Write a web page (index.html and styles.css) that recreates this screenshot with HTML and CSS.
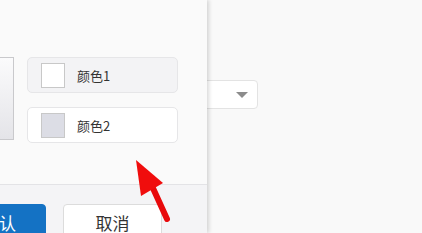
FILE: index.html
```html
<!DOCTYPE html>
<html lang="zh">
<head>
    <meta charset="UTF-8">
    <title>颜色设置</title>
    <link rel="stylesheet" href="styles.css">
</head>
<body>
    <div class="page">
        <div class="select">
            <span class="caret"></span>
        </div>
    </div>

    <div class="dialog">
        <div class="dialog-body">
            <div class="picker"></div>
            <div class="color-list">
                <div class="color-item active">
                    <span class="swatch" style="background-color: #ffffff;"></span>
                    <span class="label">颜色1</span>
                </div>
                <div class="color-item">
                    <span class="swatch" style="background-color: #dcdde5;"></span>
                    <span class="label">颜色2</span>
                </div>
            </div>
        </div>
        <div class="dialog-footer">
            <button class="btn btn-primary">确认</button>
            <button class="btn">取消</button>
        </div>
    </div>

    <svg class="pointer" width="40" height="70" viewBox="0 0 40 70">
        <line x1="17" y1="30" x2="32" y2="63" stroke="#e8090b" stroke-width="6" stroke-linecap="round"/>
        <polygon points="1,4 28,27 6,40" fill="#f00d0d"/>
    </svg>
</body>
</html>
```

FILE: styles.css
```css
body {
    margin: 0;
    background-color: #f9f9f9;
    font-family: "Microsoft YaHei", "Noto Sans CJK SC", sans-serif;
    color: #333;
    overflow: hidden;
    height: 233px;
}
.page {
    padding: 80px 0 0 180px;
}
.select {
    width: 78px;
    height: 29px;
    background-color: #fff;
    border: 1px solid #e3e3e3;
    border-radius: 4px;
    display: flex;
    align-items: center;
    justify-content: flex-end;
    padding-right: 9px;
    box-sizing: border-box;
}
.caret {
    width: 0;
    height: 0;
    border-left: 6px solid transparent;
    border-right: 6px solid transparent;
    border-top: 6px solid #8c8c8c;
}
.dialog {
    position: absolute;
    top: 0;
    left: -192px;
    width: 399px;
    height: 233px;
    overflow: hidden;
    background-color: #fafafa;
    box-shadow: 2px 0 4px rgba(0,0,0,0.15);
    display: flex;
    flex-direction: column;
}
.dialog-body {
    height: 184px;
    flex-shrink: 0;
    display: flex;
    align-items: flex-start;
    padding: 57px 0 0 2px;
    box-sizing: border-box;
    gap: 13px;
}
.picker {
    width: 204px;
    height: 83px;
    border: 1px solid #c9c9cc;
    background: linear-gradient(to bottom, #fbfbfc, #e4e4e8);
    box-sizing: border-box;
}
.color-list {
    display: flex;
    flex-direction: column;
    gap: 14px;
}
.color-item {
    width: 151px;
    height: 36px;
    box-sizing: border-box;
    border: 1px solid #e6e6e8;
    border-radius: 5px;
    background-color: #fff;
    display: flex;
    align-items: center;
    padding-left: 13px;
}
.color-item.active {
    background-color: #f3f3f5;
}
.swatch {
    width: 24px;
    height: 25px;
    border: 1px solid #c8c8c8;
    box-sizing: border-box;
}
.label {
    margin-left: 12px;
    font-size: 13px;
    color: #333;
}
.dialog-footer {
    flex-shrink: 0;
    height: 60px;
    border-top: 1px solid #e3e3e6;
    background-color: #f4f4f6;
    display: flex;
    align-items: flex-start;
    padding: 19px 0 0 144px;
    gap: 17px;
}
.btn {
    width: 99px;
    height: 36px;
    border: 1px solid #dcdcdc;
    border-radius: 4px;
    background-color: #fff;
    color: #333;
    font-size: 17px;
    font-family: "Microsoft YaHei", "Noto Sans CJK SC", sans-serif;
    padding: 0;
}
.btn-primary {
    background-color: #1472c4;
    border-color: #1472c4;
    color: #fff;
    width: 94px;
}
.pointer {
    position: absolute;
    left: 135px;
    top: 156px;
}
```
